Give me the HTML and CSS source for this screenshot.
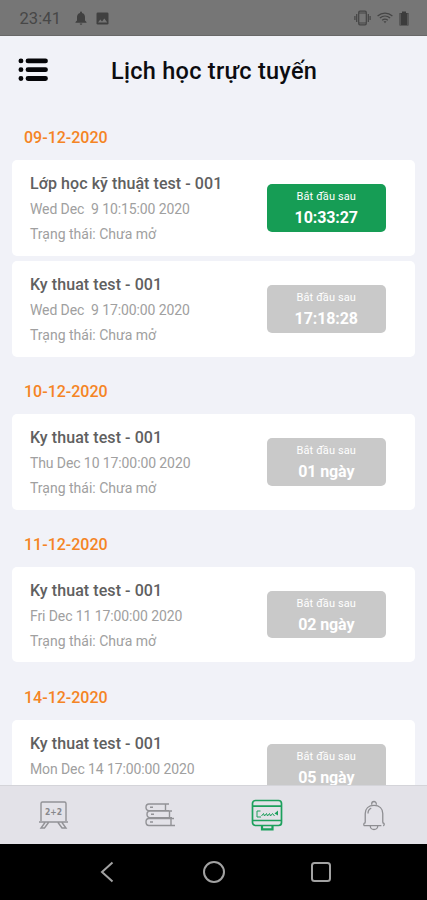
FILE: index.html
```html
<!DOCTYPE html>
<html lang="vi">
<head>
<meta charset="utf-8">
<title>Lịch học trực tuyến</title>
<link rel="stylesheet" href="styles.css">
</head>
<body>
<div class="app">
  <div class="status">
    <span class="clock">23:41</span>
    <svg class="s-bell" width="12" height="14" viewBox="0 0 12 14"><path d="M6 .5a1 1 0 0 1 1 1v.4c2 .5 3 2.100 3 4.100v3.500l1.500 1.500v.8H.5V11L2 9.500V6c0-2 1-3.600 3-4.100v-.4a1 1 0 0 1 1-1zM4.700 12.400h2.600a1.300 1.300 0 0 1-2.600 0z" fill="#404040"/></svg>
    <svg class="s-img" width="13" height="13" viewBox="0 0 13 13"><rect x=".5" y=".5" width="12" height="12" rx="1.300" fill="#404040"/><path d="M2 10.500l2.300-3 1.700 2L8.300 6.500l3 4z" fill="#757575"/></svg>
    <div class="s-right">
      <svg width="17" height="16" viewBox="0 0 17 16" fill="none" stroke="#454545" stroke-width="1.200"><rect x="4.700" y="1.200" width="7.600" height="13.600" rx="1.300"/><path d="M5 3h7M5 13h7M2.700 4v8M14.300 4v8M.9 6v4M16.100 6v4"/></svg>
      <svg width="16" height="12" viewBox="0 0 16 12" fill="none" stroke="#454545" stroke-width="1.300"><path d="M.6 3.900C5 .1 11 .1 15.400 3.900M2.900 6.100c3-2.600 7.200-2.600 10.200 0M5.200 8.300c1.700-1.400 3.900-1.400 5.600 0"/><path d="M6.500 9.300L8 11.300l1.500-2z" fill="#454545" stroke="none"/></svg>
      <svg width="10" height="15" viewBox="0 0 10 15"><path d="M3 .5h4V2h2.500v12.500h-9V2H3z" fill="#3c3c3c"/><path d="M1.500 2.500v11.500M8.500 2.500v11.500" stroke="#565656" fill="none"/></svg>
    </div>
  </div>
  <header class="header">
    <svg class="menu" width="30" height="24" viewBox="0 0 30 24" stroke="#050508" stroke-linecap="round" stroke-width="4.800"><path d="M2.900 2.900h.1M2.900 11.700h.1M2.900 20.500h.1M10 2.900h17.500M10 11.700h17.500M10 20.500h17.500"/></svg>
    <h1>Lịch học trực tuyến</h1>
  </header>
  <main class="list">
    <h2>09-12-2020</h2>
    <article class="card">
      <div class="info"><h3>Lớp học kỹ thuật test - 001</h3><p>Wed Dec  9 10:15:00 2020</p><p class="state">Trạng thái: Chưa mở</p></div>
      <div class="timer active"><small>Bắt đầu sau</small><b>10:33:27</b></div>
    </article>
    <article class="card">
      <div class="info"><h3>Ky thuat test - 001</h3><p>Wed Dec  9 17:00:00 2020</p><p class="state">Trạng thái: Chưa mở</p></div>
      <div class="timer"><small>Bắt đầu sau</small><b>17:18:28</b></div>
    </article>
    <h2>10-12-2020</h2>
    <article class="card">
      <div class="info"><h3>Ky thuat test - 001</h3><p>Thu Dec 10 17:00:00 2020</p><p class="state">Trạng thái: Chưa mở</p></div>
      <div class="timer"><small>Bắt đầu sau</small><b>01 ngày</b></div>
    </article>
    <h2>11-12-2020</h2>
    <article class="card">
      <div class="info"><h3>Ky thuat test - 001</h3><p>Fri Dec 11 17:00:00 2020</p><p class="state">Trạng thái: Chưa mở</p></div>
      <div class="timer"><small>Bắt đầu sau</small><b>02 ngày</b></div>
    </article>
    <h2>14-12-2020</h2>
    <article class="card">
      <div class="info"><h3>Ky thuat test - 001</h3><p>Mon Dec 14 17:00:00 2020</p></div>
      <div class="timer"><small>Bắt đầu sau</small><b>05 ngày</b></div>
    </article>
  </main>
  <nav class="tabs">
    <div class="tab">
      <svg width="30" height="30" viewBox="0 0 30 30" fill="none" stroke="#929296" stroke-width="1.400"><path d="M3 21V3.500Q3 2 4.500 2h22Q28 2 28 3.500V21M1 22h29M7 22.500L3 28H6.500l4-5.500M20 22.500L24 28h4L24 22.500"/><text x="15.500" y="15" class="board" textLength="17" lengthAdjust="spacingAndGlyphs">2+2</text></svg>
    </div>
    <div class="tab">
      <svg width="30" height="30" viewBox="0 0 30 30" fill="none" stroke="#929296" stroke-width="1.400"><path d="M24 4H4Q1 4 1 7.300T4 10.600H24M20.500 4v6.600M27 11H5Q2 11 2 14.300T5 17.600H27M24.500 11v6.600M29 18.500H4Q1 18.500 1 22T4 25.500H30M26 18.500v7M5 7.300h3M6 14.300h3M5 22h3"/></svg>
    </div>
    <div class="tab">
      <svg width="32" height="32" viewBox="0 0 32 32" fill="none" stroke="#1ca05c" stroke-width="1.700"><rect x="1.500" y="1.500" width="29" height="25" rx="3"/><path d="M2 7.200h28M2 21.500h28"/><path d="M11 27v3.300h10.500V27" stroke-width="2.200"/><path d="M9.500 12H6v6h4M10.500 17l2-2.500 1 2.500 2-2.500 1 2.500 2-2.500 1 2.500 2-2.500 2 2.500" stroke-width="1"/><path d="M23.500 14.500l3.500-3v5z" fill="#1ca05c" stroke="none"/></svg>
    </div>
    <div class="tab">
      <svg width="24" height="31" viewBox="0 0 26 32" preserveAspectRatio="none" fill="none" stroke="#8e8e92" stroke-width="1.400"><path d="M10.500 5V4a2.500 2.500 0 0 1 5 0v1M3.500 23V14C3.500 9 7 5.500 13 5.500S22.500 9 22.500 14V23M4 23.500H3a1.800 1.800 0 0 0-.5 3H21M22 23.500h1a1.800 1.800 0 0 1 0 3.300M9 27a4 3.500 0 0 0 8 0M6.500 14c0-3 1-4.500 3.500-5.500"/></svg>
    </div>
  </nav>
  <div class="system">
    <div class="key"><svg width="14" height="22" viewBox="0 0 14 22"><path d="M12.500 1.500L2 11l10.500 9.500"/></svg></div>
    <div class="key"><svg width="24" height="24" viewBox="0 0 24 24"><circle cx="12" cy="12" r="10"/></svg></div>
    <div class="key"><svg width="22" height="22" viewBox="0 0 22 22"><rect x="2" y="2" width="18" height="18" rx="2.500"/></svg></div>
  </div>
</div>
</body>
</html>
```
FILE: styles.css
```css
* { box-sizing: border-box; }
body { margin: 0; font-family: Roboto, "Liberation Sans", sans-serif; }
h1, h2, h3, p { margin: 0; }
svg { display: block; flex: none; }
.app { width: 427px; height: 900px; display: flex; flex-direction: column; background: #f1f2f8; overflow: hidden; }
.status { flex: none; height: 36px; background: #767676; border-bottom: 1px solid #686868; display: flex; align-items: center; padding: 1px 18px 0 19.500px; }
.clock { width: 55px; margin-top: 1px; font-size: 16.500px; color: #474747; letter-spacing: .1px; }
.s-bell { margin-right: 9px; }
.s-right { margin-left: auto; display: flex; align-items: center; gap: 6px; }
.header { flex: none; height: 67px; display: flex; align-items: center; padding: 0 18px; }
.menu { margin-top: 1px; }
h1 { margin: 3px 0 0 63px; font-size: 23.500px; line-height: 30px; font-weight: 500; color: #0c0c10; white-space: nowrap; letter-spacing: .280px; }
.list { flex: 1; min-height: 0; overflow: hidden; padding: 0 12px; }
h2 { height: 57.300px; padding: 25.300px 0 0 12px; font-size: 16px; line-height: 20px; font-weight: 500; color: #f58424; }
.card { height: 95.500px; background: #fff; border-radius: 5px; display: flex; justify-content: space-between; padding: 13px 29.500px 0 18px; }
.card + .card { margin-top: 5.500px; }
.info { white-space: pre; }
h3 { font-size: 16px; line-height: 22px; font-weight: 500; color: #606060; letter-spacing: .070px; }
.info p { font-size: 14px; line-height: 20px; margin-top: 5px; color: #a0a0a0; letter-spacing: -.1px; }
.info h3 + p { margin-top: 4px; }
.info .state { letter-spacing: 0; }
.timer { width: 118.500px; height: 47.500px; margin-top: 11px; padding-top: 5px; border-radius: 5px; background: #c9c9c9; color: #fff; display: flex; flex-direction: column; align-items: center; }
.timer.active { background: #169d55; }
.timer small { font-size: 11px; line-height: 15px; letter-spacing: .1px; }
.timer b { font-size: 16px; line-height: 20px; margin-top: 4px; font-weight: 700; letter-spacing: -.1px; }
.tabs { flex: none; height: 59px; background: #e3e2e8; border-top: 1px solid #d4d4d9; display: grid; grid-template-columns: repeat(4, 1fr); }
.tab { display: flex; align-items: center; justify-content: center; }
.board { font-family: "DejaVu Sans", sans-serif; font-size: 8px; font-weight: 700; text-anchor: middle; fill: #88888c; stroke: none; }
.system { flex: none; height: 56px; background: #000; display: flex; justify-content: center; gap: 83px; }
.key { width: 24px; display: flex; align-items: center; justify-content: center; }
.key svg { fill: none; stroke: #a2a2a2; stroke-width: 2; }
```
